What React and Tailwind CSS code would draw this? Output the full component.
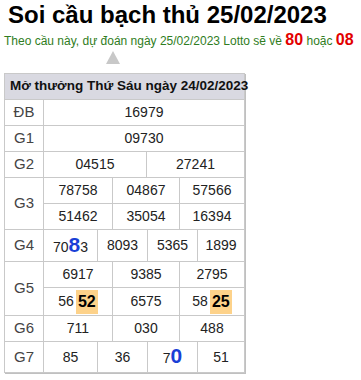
const rows3 = [
  { w: "w-[69px]" },
  { w: "w-[67px]" },
  { w: "flex-1" },
];
const rows4 = ["w-[54px]", "w-[50px]", "w-[50px]", "flex-1"];

function Cell({ className = "", children }) {
  return (
    <div
      className={`flex items-center justify-center border-l border-[#c9c9c9] ${className}`}
    >
      {children}
    </div>
  );
}

function Label({ children }) {
  return (
    <div className="w-[38px] flex items-center justify-center text-[15px] text-[#444]">
      {children}
    </div>
  );
}

function Blue({ children }) {
  return (
    <span className="text-[21px] font-bold text-[#1a3fd6] leading-none">
      {children}
    </span>
  );
}

function Hi({ children }) {
  return (
    <span className="ml-[2px] px-[2px] bg-[#fdd28a] font-bold text-[16px] text-black leading-[24px]">
      {children}
    </span>
  );
}

export default function App() {
  return (
    <div className="w-[361px] h-[380px] bg-white font-['Liberation_Sans',Arial,sans-serif] overflow-hidden">
      <h1 className="pl-2 pt-[1px] text-[24px] leading-[28px] font-bold text-black">
        Soi cầu bạch thủ 25/02/2023
      </h1>
      <p className="pl-1 mt-[3px] text-[12px] leading-[16px] text-[#2f7d22]">
        Theo cầu này, dự đoán ngày 25/02/2023 Lotto sẽ về{" "}
        <b className="text-[16px] text-[#e30000]">80</b> hoặc{" "}
        <b className="text-[16px] text-[#e30000]">08</b>
      </p>
      <div className="ml-[106px] mt-[2px] w-0 h-0 border-l-[7.5px] border-r-[7.5px] border-b-[13px] border-l-transparent border-r-transparent border-b-[#c8c8c8]" />

      <div className="ml-1 mt-[9px] w-[241px] border border-[#c9c9c9] shadow-[1px_1px_0_#c0c0c0] text-[14px] text-[#222]">
        {/* header */}
        <div className="h-[26px] bg-[#d9d9e1] border-b border-[#c9c9c9] flex items-center pl-[5px] font-bold text-[13.5px] whitespace-nowrap text-[#111]">
          Mở thưởng Thứ Sáu ngày 24/02/2023
        </div>

        {/* ĐB */}
        <div className="h-[26px] flex border-b border-[#c9c9c9]">
          <Label>ĐB</Label>
          <Cell className="flex-1">16979</Cell>
        </div>

        {/* G1 */}
        <div className="h-[26px] flex border-b border-[#c9c9c9]">
          <Label>G1</Label>
          <Cell className="flex-1">09730</Cell>
        </div>

        {/* G2 */}
        <div className="h-[26px] flex border-b border-[#c9c9c9]">
          <Label>G2</Label>
          <Cell className="w-[103px]">04515</Cell>
          <Cell className="flex-1">27241</Cell>
        </div>

        {/* G3 */}
        <div className="flex border-b border-[#c9c9c9]">
          <Label>G3</Label>
          <div className="flex-1">
            <div className="h-[26px] flex border-b border-[#c9c9c9]">
              <Cell className={rows3[0].w}>78758</Cell>
              <Cell className={rows3[1].w}>04867</Cell>
              <Cell className={rows3[2].w}>57566</Cell>
            </div>
            <div className="h-[25px] flex">
              <Cell className={rows3[0].w}>51462</Cell>
              <Cell className={rows3[1].w}>35054</Cell>
              <Cell className={rows3[2].w}>16394</Cell>
            </div>
          </div>
        </div>

        {/* G4 */}
        <div className="h-[32px] flex border-b border-[#c9c9c9]">
          <Label>G4</Label>
          <Cell className={rows4[0]}>
            <span>
              70<Blue>8</Blue>3
            </span>
          </Cell>
          <Cell className={rows4[1]}>8093</Cell>
          <Cell className={rows4[2]}>5365</Cell>
          <Cell className={rows4[3]}>1899</Cell>
        </div>

        {/* G5 */}
        <div className="flex border-b border-[#c9c9c9]">
          <Label>G5</Label>
          <div className="flex-1">
            <div className="h-[26px] flex border-b border-[#c9c9c9]">
              <Cell className={rows3[0].w}>6917</Cell>
              <Cell className={rows3[1].w}>9385</Cell>
              <Cell className={rows3[2].w}>2795</Cell>
            </div>
            <div className="h-[27px] flex">
              <Cell className={rows3[0].w}>
                56<Hi>52</Hi>
              </Cell>
              <Cell className={rows3[1].w}>6575</Cell>
              <Cell className={rows3[2].w}>
                58<Hi>25</Hi>
              </Cell>
            </div>
          </div>
        </div>

        {/* G6 */}
        <div className="h-[26px] flex border-b border-[#c9c9c9]">
          <Label>G6</Label>
          <Cell className={rows3[0].w}>711</Cell>
          <Cell className={rows3[1].w}>030</Cell>
          <Cell className={rows3[2].w}>488</Cell>
        </div>

        {/* G7 */}
        <div className="h-[30px] flex">
          <Label>G7</Label>
          <Cell className={rows4[0]}>85</Cell>
          <Cell className={rows4[1]}>36</Cell>
          <Cell className={rows4[2]}>
            <span>
              7<Blue>0</Blue>
            </span>
          </Cell>
          <Cell className={rows4[3]}>51</Cell>
        </div>
      </div>
    </div>
  );
}
